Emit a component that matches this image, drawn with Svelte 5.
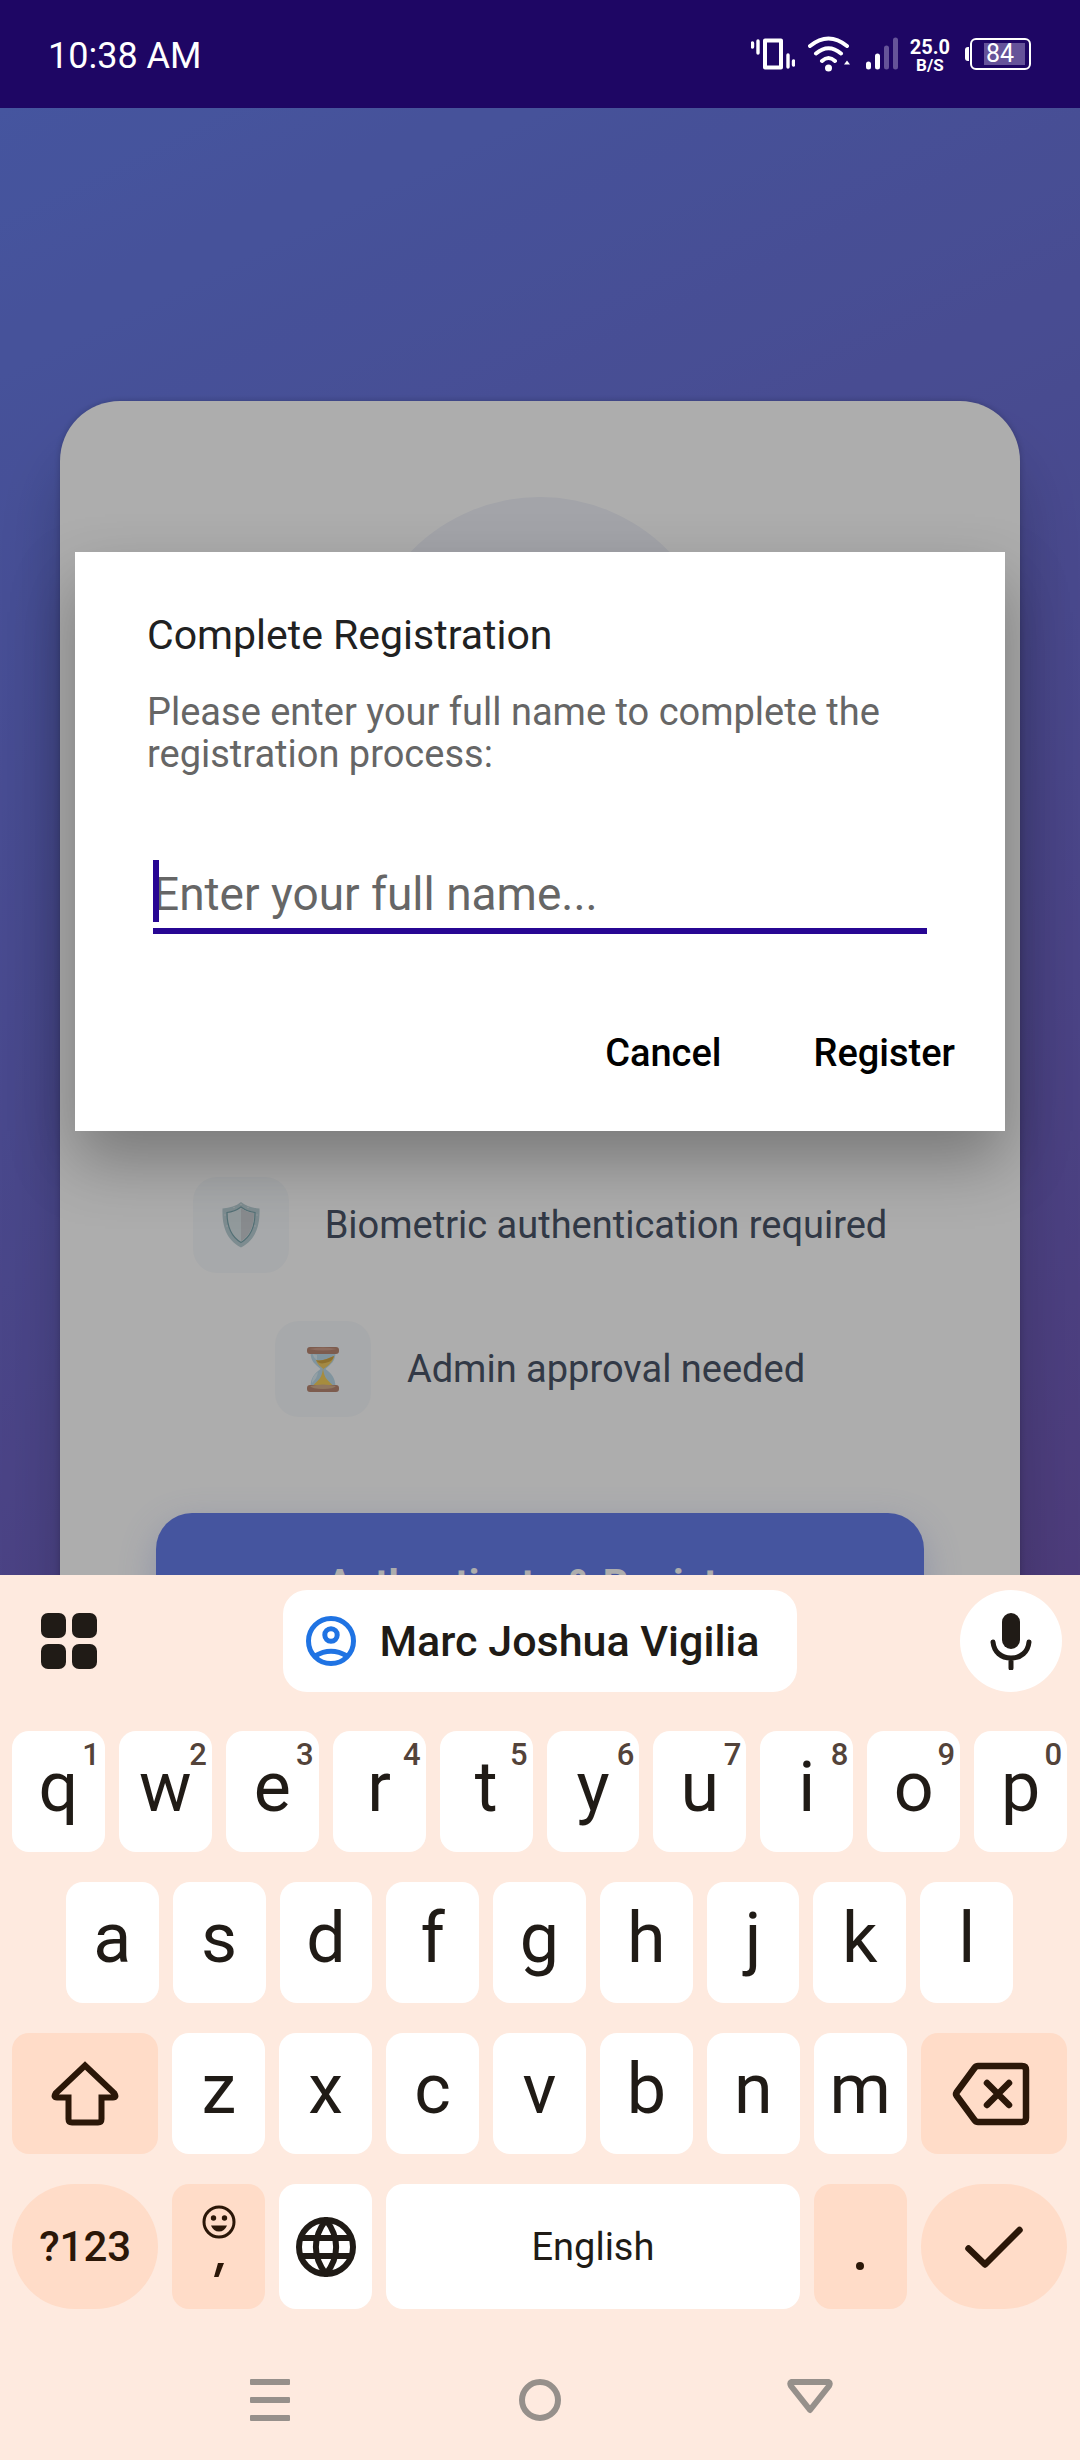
<script>
  const topRow = [...'qwertyuiop'].map((letter, i) => ({ letter, hint: String((i + 1) % 10) }));
  const middleRow = [...'asdfghjkl'];
  const bottomRow = [...'zxcvbnm'];
  let fullName = $state('');
</script>

<div class="phone">
  <header class="status">
    <time>10:38 AM</time>
    <div class="indicators">
      <svg class="vibrate" width="44" height="34" viewBox="0 0 44 34" aria-hidden="true">
        <path d="M14 3.5h16v27H14z" fill="none" stroke="#fff" stroke-width="4" stroke-linejoin="round" />
        <path d="M1.5 6v4M7 4v12M37 18v12M42.5 24v4" stroke="#fff" stroke-width="3.4" stroke-linecap="round" />
      </svg>
      <svg class="wifi" width="42" height="36" viewBox="0 0 42 36" aria-hidden="true">
        <path d="M2 10Q20.500 -5 39 10M8 17.500Q20.500 7 33 17.500M14 25Q20.500 19 27 25" fill="none" stroke="#fff" stroke-width="4" stroke-linecap="round" />
        <circle cx="20.500" cy="32" r="3.500" fill="#fff" />
        <path d="M36 28.500l3-4 3 4z" fill="#fff" />
      </svg>
      <svg class="signal" width="32" height="34" viewBox="0 0 32 34" aria-hidden="true">
        <path d="M2.500 27v3M11.500 19v11" stroke="#fff" stroke-width="5" stroke-linecap="round" />
        <path d="M20.500 11v19M29.500 3v27" stroke="#655399" stroke-width="5" stroke-linecap="round" />
      </svg>
      <div class="speed"><span>25.0</span><small>B/S</small></div>
      <div class="battery"><span>84</span></div>
    </div>
  </header>

  <main class="app">
    <section class="card">
      <div class="avatar"></div>
      <ul class="features">
        <li>
          <span class="badge">
            <svg width="38" height="46" viewBox="0 0 38 46" aria-hidden="true">
              <path d="M19 0c5 4 11 6 18.500 6.500C38 22 35 37 19 45.500 3 37 0 22 .5 6.500 8 6 14 4 19 0z" fill="#b9ced4" />
              <path d="M19 5c4 3 8.500 5 14 5.500C33 22 30 34 19 40.500 8 34 5 22 5 10.500 10.500 10 15 8 19 5z" fill="#d8e4e6" stroke="#7ba5ad" stroke-width="1.200" />
              <path d="M19 6c4 3 8 4.500 13 5 0 11-3 22-13 28.500z" fill="#c9cdd2" />
              <g fill="#dfe7ea"><circle cx="19" cy="2.500" r=".7" /><circle cx="12" cy="5.500" r=".7" /><circle cx="26" cy="5.500" r=".7" /><circle cx="3" cy="13" r=".7" /><circle cx="35" cy="13" r=".7" /><circle cx="5" cy="24" r=".7" /><circle cx="33" cy="24" r=".7" /></g>
            </svg>
          </span>
          Biometric authentication required
        </li>
        <li>
          <span class="badge">
            <svg width="32" height="46" viewBox="0 0 32 46" aria-hidden="true">
              <path d="M3.500 6h25c0 10-5 12-10 17 5 4 10 8 10 18h-25c0-10 5-14 10-18-5-5-10-7-10-17z" fill="#bddbe9" />
              <path d="M9 14c6 2 12-2 18-4-1 6-5 9-10.500 13C13 20 10 18 9 14z" fill="#f0cb64" />
              <path d="M9 14c6 2 12-2 18-4-1 4-4 6-9 7-4 1-7 0-9-3z" fill="#d2a644" />
              <path d="M16 22c1 8 2 10 9.500 17h-19C14 32 15 30 16 22z" fill="#f5cf5c" />
              <path d="M5 37c0-5 2-8 6-11-1 5-2 7-6 11zM6 8l4 1v5c-3-2-4-4-4-6z" fill="#dcecf3" />
              <rect y="1" width="32" height="7" rx="3" fill="#b98873" />
              <path d="M2 3q14-3 28 0-14 3-28 0z" fill="#cf9f8c" />
              <rect y="39" width="32" height="7" rx="3" fill="#b98873" />
              <path d="M3 40q13-3 26 0-2 3-13 3T3 40z" fill="#d4b08c" />
            </svg>
          </span>
          Admin approval needed
        </li>
      </ul>
      <button class="authenticate" type="button">Authenticate &amp; Register</button>
    </section>

    <div class="scrim">
      <form class="dialog" role="dialog" aria-labelledby="dialog-title">
        <h1 id="dialog-title">Complete Registration</h1>
        <label for="full-name">Please enter your full name to complete the registration process:</label>
        <div class="field">
          <input id="full-name" type="text" placeholder="Enter your full name..." bind:value={fullName} />
          <span class="caret"></span>
        </div>
        <div class="actions">
          <button type="button">Cancel</button>
          <button type="button">Register</button>
        </div>
      </form>
    </div>
  </main>

  <section class="keyboard" aria-label="Keyboard">
    <div class="strip">
      <button class="round" type="button" aria-label="Open features menu">
        <svg width="56" height="56" viewBox="0 0 56 56" fill="#201b16">
          <rect width="25" height="25" rx="7" /><rect x="31" width="25" height="25" rx="7" />
          <rect y="31" width="25" height="25" rx="7" /><rect x="31" y="31" width="25" height="25" rx="7" />
        </svg>
      </button>
      <button class="suggestion" type="button">
        <svg width="50" height="50" viewBox="0 0 50 50" fill="none" stroke="#1f73e3" stroke-width="5" aria-hidden="true">
          <circle cx="25" cy="25" r="22.500" /><circle cx="25" cy="19" r="6.200" />
          <path d="M9 40Q25 30.500 41 40" />
        </svg>
        Marc Joshua Vigilia
      </button>
      <button class="round mic" type="button" aria-label="Voice input">
        <svg width="42" height="58" viewBox="0 0 42 58">
          <rect x="12" y="1" width="18" height="36" rx="9" fill="#201b16" />
          <path d="M3 30c1 10 8 16 18 16s17-6 18-16M21 46v10" fill="none" stroke="#201b16" stroke-width="5" stroke-linecap="round" />
        </svg>
      </button>
    </div>

    <div class="rows">
      <div class="row">
        {#each topRow as key}
          <button class="key" type="button"><span class="hint">{key.hint}</span>{key.letter}</button>
        {/each}
      </div>
      <div class="row inset">
        {#each middleRow as letter}
          <button class="key" type="button">{letter}</button>
        {/each}
      </div>
      <div class="row">
        <button class="key tinted wide" type="button" aria-label="Shift">
          <svg width="68" height="66" viewBox="0 0 68 66" fill="none" stroke="#2b1708" stroke-width="6">
            <path d="M34 4.500L4.500 32.500Q2 36.500 6 36.500H17.500V58Q17.500 61.500 21 61.500H47Q50.500 61.500 50.500 58V36.500H62Q66 36.500 63.500 32.500Z" />
          </svg>
        </button>
        {#each bottomRow as letter}
          <button class="key" type="button">{letter}</button>
        {/each}
        <button class="key tinted wide" type="button" aria-label="Backspace">
          <svg width="84" height="64" viewBox="0 0 84 64" fill="none" stroke="#2b1708" stroke-width="6.500" stroke-linejoin="round" stroke-linecap="round">
            <path d="M26 4H70Q74 4 74 8V56Q74 60 70 60H26Q24 60 22.500 58L4.500 33.500Q3.500 32 4.500 30.500L22.500 6Q24 4 26 4Z" />
            <path d="M35 21L57 43M57 21L35 43" />
          </svg>
        </button>
      </div>
      <div class="row tall">
        <button class="key tinted wide pill" type="button">?123</button>
        <button class="key tinted comma" type="button" aria-label="Comma and emoji">
          <svg width="34" height="34" viewBox="0 0 34 34">
            <circle cx="17" cy="17" r="15" fill="none" stroke="#2b1708" stroke-width="3" />
            <circle cx="11.500" cy="13" r="2.700" fill="#2b1708" /><circle cx="22.500" cy="13" r="2.700" fill="#2b1708" />
            <path d="M9 20.500h16q-2.500 6-8 6t-8-6z" fill="#2b1708" />
          </svg>
          <svg width="10" height="14" viewBox="0 0 10 14"><path d="M4 0h6L4.500 14H0z" fill="#2b1708" /></svg>
        </button>
        <button class="key" type="button" aria-label="Switch language">
          <svg width="60" height="60" viewBox="0 0 60 60" fill="none" stroke="#201b16" stroke-width="6">
            <circle cx="30" cy="30" r="27" />
            <path d="M4 21H56M4 39H56" />
            <path d="M30 3C16.500 20 16.500 40 30 57C43.500 40 43.500 20 30 3Z" />
          </svg>
        </button>
        <button class="key space" type="button">English</button>
        <button class="key tinted period" type="button" aria-label="Period"><svg width="8" height="8" viewBox="0 0 8 8"><circle cx="4" cy="4" r="4" fill="#2b1708" /></svg></button>
        <button class="key tinted wide pill" type="button" aria-label="Done">
          <svg width="58" height="42" viewBox="0 0 58 42" fill="none" stroke="#2b1708" stroke-width="6.500" stroke-linejoin="round" stroke-linecap="round"><path d="M3.500 22.500L20 38.500L54.500 4" /></svg>
        </button>
      </div>
    </div>

    <nav class="system" aria-label="System navigation">
      <button type="button" aria-label="Recent apps">
        <svg width="40" height="42" viewBox="0 0 40 42" fill="#96908b"><rect width="40" height="6" rx="1" /><rect y="18" width="40" height="6" rx="1" /><rect y="36" width="40" height="6" rx="1" /></svg>
      </button>
      <button type="button" aria-label="Home">
        <svg width="42" height="42" viewBox="0 0 42 42"><circle cx="21" cy="21" r="18" fill="none" stroke="#96908b" stroke-width="6" /></svg>
      </button>
      <button type="button" aria-label="Back">
        <svg width="46" height="42" viewBox="0 0 46 42"><path d="M4.500 3H41.500Q43.500 4 42 7L23 31L4 7Q2.500 4 4.500 3Z" fill="none" stroke="#96908b" stroke-width="6" stroke-linejoin="round" /></svg>
      </button>
    </nav>
  </section>
</div>

<style>
  :global(body) {
    margin: 0;
  }
  .phone {
    min-height: 100vh;
    display: flex;
    flex-direction: column;
    font-family: Roboto, "Liberation Sans", sans-serif;
  }
  .phone * {
    box-sizing: border-box;
  }
  button {
    border: 0;
    padding: 0;
    background: none;
    font: inherit;
    color: inherit;
  }
  svg {
    display: block;
    flex: none;
  }

  .status {
    height: 108px;
    padding: 0 49px 0 48px;
    display: flex;
    align-items: center;
    justify-content: space-between;
    background: #1e0664;
    color: #fff;
    font-size: 36px;
  }
  .status time,
  .speed {
    padding-top: 3px;
  }
  .indicators {
    display: flex;
    align-items: center;
  }
  .vibrate {
    margin-right: 13px;
  }
  .wifi {
    margin-right: 16px;
  }
  .signal {
    margin-right: 12px;
  }
  .speed {
    display: flex;
    flex-direction: column;
    align-items: center;
    margin-right: 15px;
    font-weight: 700;
    font-size: 20px;
    line-height: 18px;
  }
  .speed small {
    font-size: 17px;
  }
  .battery {
    position: relative;
    width: 61px;
    height: 32px;
    margin-left: 5px;
    padding: 3px 4px 3px 12px;
    border: 2px solid #fff;
    border-radius: 6px;
  }
  .battery::before {
    content: "";
    position: absolute;
    left: -7px;
    top: 7px;
    width: 4px;
    height: 14px;
    border-radius: 3px 0 0 3px;
    background: #fff;
  }
  .battery span {
    display: block;
    height: 22px;
    padding-left: 2px;
    background: #655399;
    font-size: 25px;
    line-height: 22px;
  }

  .app {
    position: relative;
    flex: 1 1 0px;
    overflow: hidden;
    padding: 293px 60px 0;
    background: linear-gradient(154deg, #667eea, #764ba2) 0 0 / 100% 150% no-repeat;
  }
  .card {
    padding: 96px 96px 120px;
    border-radius: 60px;
    background: #fff;
    box-shadow: 0 54px 60px rgba(0, 0, 0, 0.2), 0 0 6px rgba(0, 0, 0, 0.2);
  }
  .avatar {
    width: 360px;
    height: 360px;
    margin: 0 auto 320px;
    border-radius: 50%;
    background: #f0f2fa;
  }
  .features {
    margin: 0 0 96px;
    padding: 0;
    list-style: none;
    display: flex;
    flex-direction: column;
    align-items: center;
    gap: 48px;
  }
  .features li {
    display: flex;
    align-items: center;
    gap: 36px;
    color: #4a5568;
    font-size: 38px;
    white-space: nowrap;
  }
  .badge {
    width: 96px;
    height: 96px;
    display: grid;
    place-items: center;
    border-radius: 24px;
    background: #f7fafc;
  }
  .authenticate {
    width: 100%;
    padding: 48px 0;
    border-radius: 36px;
    background: #667eea;
    box-shadow: 0 12px 36px rgba(102, 126, 234, 0.3);
    color: #fff;
    font-size: 40px;
    font-weight: 700;
    line-height: 48px;
  }
  .scrim {
    position: absolute;
    inset: 0;
    display: flex;
    align-items: center;
    justify-content: center;
    padding: 0 75px;
    background: rgba(0, 0, 0, 0.32);
  }
  .dialog {
    width: 100%;
    padding: 59px 0 27px;
    background: #fff;
    box-shadow: 0 30px 60px rgba(0, 0, 0, 0.3);
  }
  h1 {
    margin: 0 72px 32px;
    font-size: 41px;
    line-height: 48px;
    font-weight: 400;
    color: #212121;
  }
  label {
    display: block;
    margin: 0 72px;
    color: #666;
    font-size: 38px;
    line-height: 42px;
  }
  .field {
    position: relative;
    margin: 84px 78px 0;
  }
  input {
    display: block;
    width: 100%;
    height: 75px;
    padding: 8px 0 7px;
    border: 0;
    border-bottom: 6px solid #270693;
    border-radius: 0;
    background: none;
    outline: none;
    font: 46px/54px Roboto, "Liberation Sans", sans-serif;
    color: #212121;
  }
  input::placeholder {
    color: #666;
    opacity: 1;
  }
  .caret {
    position: absolute;
    left: 0;
    top: 1px;
    width: 6px;
    height: 62px;
    background: #270693;
  }
  .actions {
    display: flex;
    justify-content: flex-end;
    gap: 32px;
    margin: 68px 20px 0;
  }
  .actions button {
    padding: 30px;
    color: #000;
    font-size: 38px;
    font-weight: 500;
    line-height: 42px;
  }

  .keyboard {
    padding-top: 15px;
    background: #feeadf;
    color: #201b16;
  }
  .strip {
    display: grid;
    grid-template-columns: 1fr auto 1fr;
    align-items: center;
    padding: 0 18px;
    margin-bottom: 39px;
  }
  .round {
    width: 102px;
    height: 102px;
    display: grid;
    place-items: center;
    border-radius: 50%;
  }
  .mic {
    justify-self: end;
    background: #fff;
  }
  .suggestion {
    height: 102px;
    padding: 0 38px 0 23px;
    display: flex;
    align-items: center;
    gap: 24px;
    border-radius: 24px;
    background: #fff;
    font-size: 43px;
    font-weight: 500;
  }
  .rows {
    display: flex;
    flex-direction: column;
    gap: 30px;
    padding: 0 13px 0 12px;
  }
  .row {
    display: flex;
    gap: 14px;
    height: 121px;
  }
  .inset {
    padding: 0 54px;
  }
  .tall {
    height: 125px;
  }
  .key {
    position: relative;
    flex: 1 1 0px;
    min-width: 0;
    display: flex;
    align-items: center;
    justify-content: center;
    padding-bottom: 9px;
    border-radius: 17px;
    background: #fff;
    font-size: 70px;
    line-height: 80px;
  }
  .key:has(> svg) {
    padding-bottom: 0;
  }
  .hint {
    position: absolute;
    top: 8px;
    right: 5px;
    color: #53433a;
    font-size: 31px;
    font-weight: 500;
    line-height: 32px;
  }
  .tinted {
    background: #ffdcc8;
    color: #2b1708;
  }
  .wide {
    flex: 1.5 1 7px;
  }
  .pill {
    border-radius: 63px;
    padding-bottom: 0;
    font-size: 42px;
    font-weight: 500;
  }
  .comma {
    flex-direction: column;
    justify-content: flex-start;
    gap: 24px;
    padding-top: 21px;
  }
  .period {
    align-items: flex-end;
  }
  .key.period {
    padding-bottom: 39px;
  }
  .space {
    flex: 4 1 42px;
    padding-bottom: 0;
    font-size: 38px;
  }
  .system {
    display: flex;
    margin-top: 31px;
    padding: 0 12.5%;
    height: 120px;
  }
  .system button {
    flex: 1;
    display: grid;
    place-items: center;
  }
</style>
